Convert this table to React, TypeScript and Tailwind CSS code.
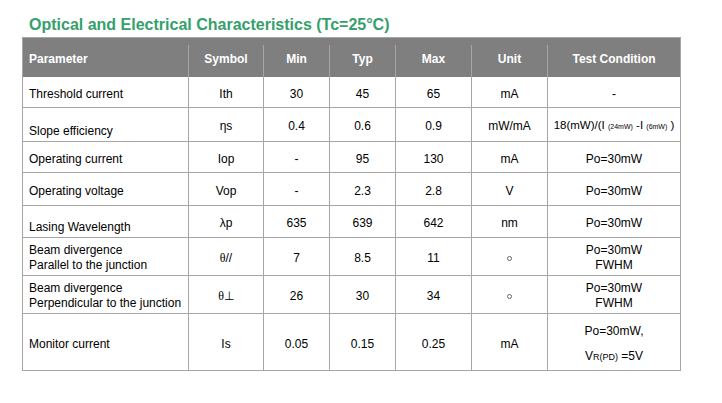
import React from "react";

const cols = "grid grid-cols-[166px_75px_66px_66px_76px_76px_133px]";

function HeadCell({ children, first, last }: { children: React.ReactNode; first?: boolean; last?: boolean }) {
  return (
    <div
      className={
        "relative h-[39px] pt-[2px] flex items-center font-bold text-white " +
        (first ? "pl-[6px] " : "justify-center ") +
        (last
          ? "border-r border-[#a6a6a6]"
          : "border-r border-[#7f7f7f] after:content-[''] after:absolute after:right-[-1px] after:top-[7px] after:bottom-0 after:w-px after:bg-[#a6a6a6]")
      }
    >
      {children}
    </div>
  );
}

function Deg() {
  return <span className="inline-block w-[5px] h-[5px] rounded-full border border-[#666]" />;
}

type Row = {
  h: string;
  param: React.ReactNode;
  paramCls?: string;
  cells: React.ReactNode[];
};

const rows: Row[] = [
  { h: "h-[31px]", param: "Threshold current", cells: ["Ith", "30", "45", "65", "mA", "-"] },
  {
    h: "h-[34px]",
    param: "Slope efficiency",
    paramCls: "pt-[12px]",
    cells: [
      "ηs",
      "0.4",
      "0.6",
      "0.9",
      "mW/mA",
      <span className="whitespace-nowrap text-[11.5px]">
        18(mW)/(I <span className="text-[7px]">(24mW)</span> -I <span className="text-[7px]">(6mW)</span> )
      </span>,
    ],
  },
  { h: "h-[31px]", param: "Operating current", cells: ["Iop", "-", "95", "130", "mA", "Po=30mW"] },
  { h: "h-[33px]", param: "Operating voltage", cells: ["Vop", "-", "2.3", "2.8", "V", "Po=30mW"] },
  {
    h: "h-[32px]",
    param: "Lasing Wavelength",
    paramCls: "pt-[11px]",
    cells: ["λp", "635", "639", "642", "nm", "Po=30mW"],
  },
  {
    h: "h-[38px]",
    param: (
      <div className="leading-[15px]">
        Beam divergence
        <br />
        Parallel to the junction
      </div>
    ),
    cells: [
      <span><span className="font-['Liberation_Serif',serif]">θ</span>//</span>,
      "7",
      "8.5",
      "11",
      <Deg />,
      <div className="leading-[15px] text-center">
        Po=30mW
        <br />
        FWHM
      </div>,
    ],
  },
  {
    h: "h-[38px]",
    param: (
      <div className="leading-[15px]">
        Beam divergence
        <br />
        Perpendicular to the junction
      </div>
    ),
    cells: [
      <span><span className="font-['Liberation_Serif',serif]">θ⊥</span></span>,
      "26",
      "30",
      "34",
      <Deg />,
      <div className="leading-[15px] text-center">
        Po=30mW
        <br />
        FWHM
      </div>,
    ],
  },
  {
    h: "h-[57px]",
    param: "Monitor current",
    cells: [
      "Is",
      "0.05",
      "0.15",
      "0.25",
      "mA",
      <div className="flex flex-col items-center gap-[11px] leading-[14px]">
        <span>Po=30mW,</span>
        <span>
          V<span className="text-[9px]">R(PD)</span> =5V
        </span>
      </div>,
    ],
  },
];

export default function App() {
  return (
    <div className="w-[722px] h-[403px] bg-white font-['Liberation_Sans',Arial,sans-serif] text-black text-[12px]">
      <div className="pt-[16px] pl-[29px] h-[37px] text-[16px] leading-[18px] font-bold text-[#36a06c]">
        Optical and Electrical Characteristics (Tc=25°C)
      </div>
      <div className="ml-[22px] w-[659px] border-l border-t border-[#a6a6a6]">
        <div className={cols + " bg-[#7f7f7f]"}>
          <HeadCell first>Parameter</HeadCell>
          <HeadCell>Symbol</HeadCell>
          <HeadCell>Min</HeadCell>
          <HeadCell>Typ</HeadCell>
          <HeadCell>Max</HeadCell>
          <HeadCell>Unit</HeadCell>
          <HeadCell last>Test Condition</HeadCell>
        </div>
        {rows.map((r, i) => (
          <div key={i} className={cols}>
            <div className={r.h + " flex items-center pl-[6px] border-r border-b border-[#a6a6a6] " + (r.paramCls ?? "pt-[3px]")}>
              {r.param}
            </div>
            {r.cells.map((c, j) => (
              <div key={j} className={r.h + " flex items-center justify-center pt-[3px] border-r border-b border-[#a6a6a6]"}>
                {c}
              </div>
            ))}
          </div>
        ))}
      </div>
    </div>
  );
}
